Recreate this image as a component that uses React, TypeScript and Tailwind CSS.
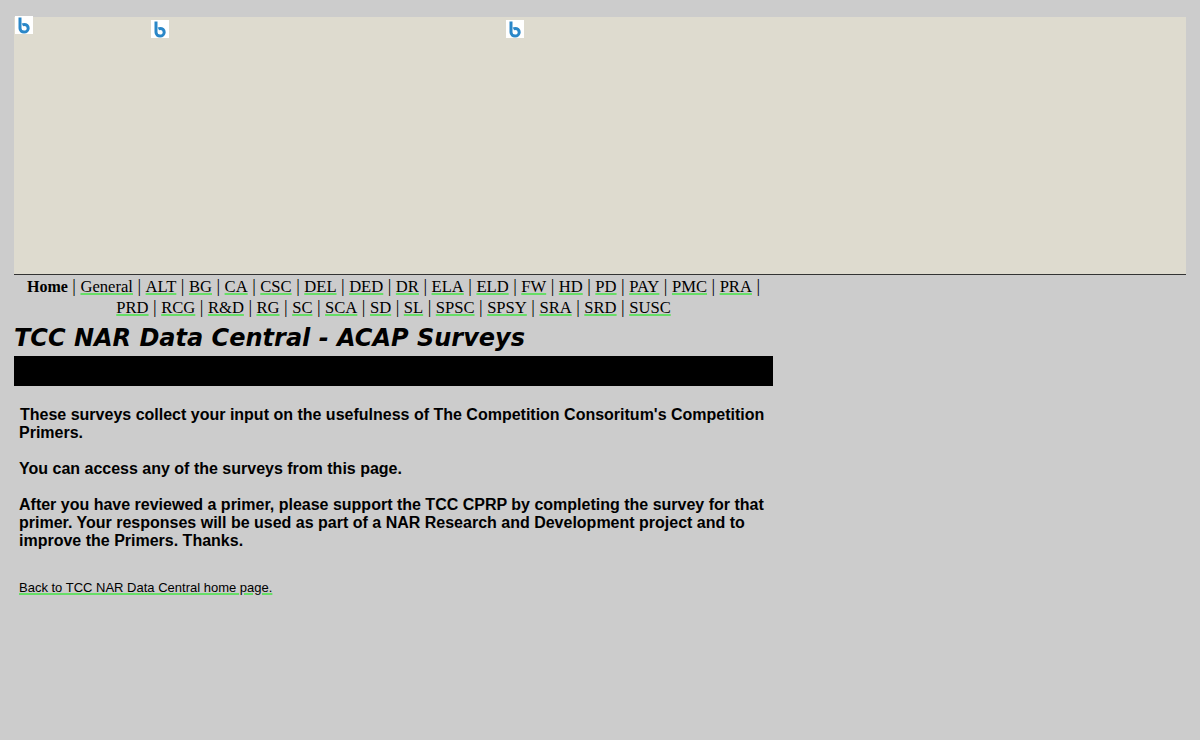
const firstRow = ['ALT', 'BG', 'CA', 'CSC', 'DEL', 'DED', 'DR', 'ELA', 'ELD', 'FW', 'HD', 'PD', 'PAY', 'PMC', 'PRA'];
const secondRow = ['PRD', 'RCG', 'R&D', 'RG', 'SC', 'SCA', 'SD', 'SL', 'SPSC', 'SPSY', 'SRA', 'SRD', 'SUSC'];

function NavLink({ label }: { label: string }) {
  return <a className="text-[16.6px] underline decoration-[#66dd66] decoration-2 underline-offset-1">{label}</a>;
}

// small white tile with the blue "b" logo
function BingTile({ className }: { className: string }) {
  return (
    <div className={`absolute w-[18px] h-[18px] bg-white ${className}`}>
      <svg viewBox="0 0 18 18" className="w-[18px] h-[18px]">
        <path d="M5 1.5v10.7c0 2.4 1.9 3.8 4 3.8 2.5 0 4.2-1.8 4.2-3.8 0-2.3-1.8-3.7-4-3.7-.7 0-1.2.1-1.8.4" fill="none" stroke="#2a87c8" strokeWidth="3" />
      </svg>
    </div>
  );
}

export default function App() {
  return (
    <div className="relative h-[740px] bg-[#cccccc] pt-[17px] px-[14px] text-black font-['Liberation_Sans',sans-serif] overflow-hidden">
      <BingTile className="left-[15px] top-[16px]" />
      <BingTile className="left-[151px] top-[20px]" />
      <BingTile className="left-[506px] top-[20px]" />

      {/* Banner */}
      <div className="h-[258px] bg-[#dedbcf] border-b border-[#333333]" />

      <div className="w-[759px]">
        {/* Section links */}
        <div className="pt-[1px] text-center text-[18px] leading-[21px] font-['Liberation_Serif',serif]">
          <div>
            <b className="text-[16px]">Home</b> | <NavLink label="General" />
            {firstRow.map((item) => (
              <span key={item}> | <NavLink label={item} /></span>
            ))} |
          </div>
          <div>
            {secondRow.map((item, index) => (
              <span key={item}>{index > 0 ? ' | ' : ''}<NavLink label={item} /></span>
            ))}
          </div>
        </div>

        <h1 className="mt-[3px] h-[34px] text-[24px] leading-[34px] font-bold italic whitespace-nowrap font-['DejaVu_Sans',sans-serif]">
          TCC NAR Data Central - ACAP Surveys
        </h1>

        <div className="mt-[1px] h-[30px] bg-black" />

        {/* Intro text */}
        <div className="mt-[20px] pl-[5px] pr-[6px] text-[16px] leading-[18px] font-bold">
          <p className="pl-px">These surveys collect your input on the usefulness of The Competition Consoritum's Competition <span className="-ml-px">Primers.</span></p>
          <p className="mt-[18px]">You can access any of the surveys from this page.</p>
          <p className="mt-[18px]">After you have reviewed a primer, please support the TCC CPRP by completing the survey for that primer. Your responses will be used as part of a NAR Research and Development project and to improve the Primers. Thanks.</p>
        </div>

        <p className="mt-[30px] pl-[5px] text-[13px] leading-[16px]">
          <a className="underline decoration-[#66dd66] decoration-2 underline-offset-1">Back to TCC NAR Data Central home page.</a>
        </p>
      </div>
    </div>
  );
}
